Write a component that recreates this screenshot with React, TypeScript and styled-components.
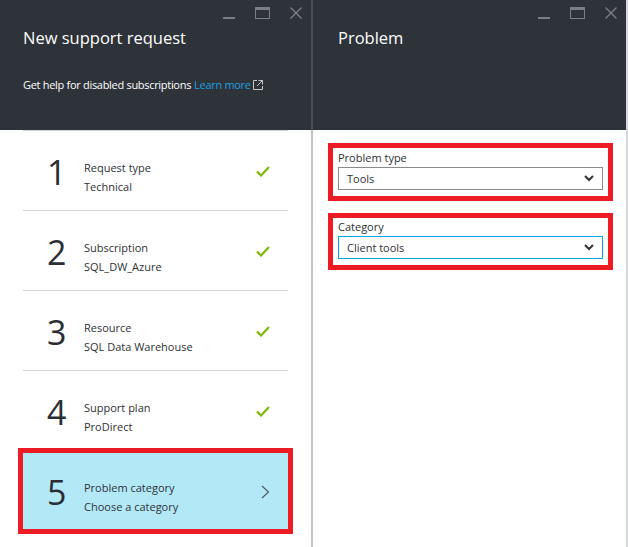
import styled, { createGlobalStyle } from "styled-components";

const GlobalStyle = createGlobalStyle`
  body {
    margin: 0;
    background: #ffffff;
    font-family: "Open Sans", "Noto Sans", sans-serif;
  }
`;

const Page = styled.div`
  display: flex;
  width: 628px;
  height: 547px;
  overflow: hidden;
`;

const Blade = styled.section<{ $width: number }>`
  display: flex;
  flex-direction: column;
  width: ${p => p.$width}px;
  height: 547px;
`;

const Header = styled.header<{ $edge: string; $indent: number }>`
  position: relative;
  height: 130px;
  flex: none;
  background: #2e3239;
  border-right: 2px solid ${p => p.$edge};
  padding: 28px 0 0 ${p => p.$indent}px;
  box-sizing: border-box;
  color: #ffffff;
`;

const Title = styled.h1`
  margin: 0;
  font-size: 16.5px;
  font-weight: 400;
  line-height: 20px;
  color: #ffffff;
`;

const Subtitle = styled.p`
  margin: 30px 0 0;
  font-size: 11px;
  letter-spacing: -0.3px;
  line-height: 14px;
  color: #ffffff;
  display: flex;
  align-items: center;
`;

const Link = styled.a`
  color: #1ba1e2;
  text-decoration: none;
  margin-left: 3px;
  display: inline-flex;
  align-items: center;
  gap: 2px;
`;

const Controls = styled.div`
  position: absolute;
  top: 7px;
  right: 9px;
  display: flex;
  align-items: flex-start;
  gap: 20px;
`;

const Body = styled.div<{ $edge: string; $pad: string }>`
  flex: 1;
  border-right: 2px solid ${p => p.$edge};
  padding: ${p => p.$pad};
  display: flex;
  flex-direction: column;
`;

const Step = styled.div<{ $active?: boolean }>`
  display: flex;
  align-items: center;
  height: ${p => (p.$active ? "76px" : "80px")};
  margin-top: ${p => (p.$active ? "3px" : "0")};
  border-top: ${p => (p.$active ? "none" : "1px solid #d4d4d4")};
  background: ${p => (p.$active ? "#b3e9f7" : "transparent")};
  outline: ${p => (p.$active ? "5px solid #ed1c24" : "none")};
  box-sizing: border-box;
  padding: 2px 18px 0 0;
`;

const StepNumber = styled.div`
  width: 61px;
  padding-left: 24px;
  box-sizing: border-box;
  font-size: 34px;
  line-height: 40px;
  color: #2a2e33;
`;

const StepText = styled.div`
  flex: 1;
  display: flex;
  flex-direction: column;
  padding-top: 10px;
  font-size: 11px;
  line-height: 19px;
  color: #2f3237;
`;

const Field = styled.div<{ $top: number }>`
  border: 5px solid #ed1c24;
  padding: ${p => p.$top}px 5px 6px;
  margin-bottom: 12px;
`;

const FieldLabel = styled.div`
  font-size: 11px;
  line-height: 15px;
  color: #2f3237;
  margin-bottom: 2px;
`;

const Select = styled.div<{ $focus?: boolean }>`
  display: flex;
  align-items: center;
  justify-content: space-between;
  height: 23px;
  box-sizing: border-box;
  border: 1px solid ${p => (p.$focus ? "#00a8e8" : "#8a8a8a")};
  padding: 0 8px 0 8px;
  font-size: 11px;
  color: #2f3237;
  background: #ffffff;
`;

const WindowControls = () => (
  <Controls>
    <svg width="12" height="12" viewBox="0 0 12 12">
      <rect x="0" y="10" width="12" height="2" fill="#7b7e84" />
    </svg>
    <svg width="15" height="12" viewBox="0 0 15 12">
      <rect x="0.5" y="0.5" width="14" height="11" fill="none" stroke="#7b7e84" />
      <rect x="0" y="0" width="15" height="3" fill="#7b7e84" />
    </svg>
    <svg width="12" height="12" viewBox="0 0 12 12">
      <path d="M0.5 0.5 L11.5 11.5 M11.5 0.5 L0.5 11.5" stroke="#7b7e84" strokeWidth="1.4" />
    </svg>
  </Controls>
);

const Check = () => (
  <svg width="14" height="11" viewBox="0 0 14 11">
    <path d="M1 5.5 L5 9.5 L13 1" fill="none" stroke="#7fba00" strokeWidth="2.2" />
  </svg>
);

const Chevron = () => (
  <svg width="9" height="14" viewBox="0 0 9 14">
    <path d="M1 1 L7.5 7 L1 13" fill="none" stroke="#555a60" strokeWidth="1.2" />
  </svg>
);

const DropArrow = () => (
  <svg width="10" height="7" viewBox="0 0 10 7">
    <path d="M1 1 L5 5 L9 1" fill="none" stroke="#2f3237" strokeWidth="2" />
  </svg>
);

const ExternalIcon = () => (
  <svg width="10" height="10" viewBox="0 0 10 10">
    <path d="M4 0.5 H0.5 V9.5 H9.5 V6" fill="none" stroke="#c8c8c8" strokeWidth="1" />
    <path d="M5.5 0.5 H9.5 V4.5 M9.5 0.5 L4 6" fill="none" stroke="#c8c8c8" strokeWidth="1" />
  </svg>
);

const steps = [
  { n: 1, label: "Request type", value: "Technical", done: true },
  { n: 2, label: "Subscription", value: "SQL_DW_Azure", done: true },
  { n: 3, label: "Resource", value: "SQL Data Warehouse", done: true },
  { n: 4, label: "Support plan", value: "ProDirect", done: true },
  { n: 5, label: "Problem category", value: "Choose a category", done: false },
];

export default function App() {
  return (
    <Page>
      <GlobalStyle />
      <Blade $width={313}>
        <Header $edge="#4a4e55" $indent={23}>
          <WindowControls />
          <Title>New support request</Title>
          <Subtitle>
            Get help for disabled subscriptions
            <Link href="#">
              Learn more
              <ExternalIcon />
            </Link>
          </Subtitle>
        </Header>
        <Body $edge="#c4c4c4" $pad="0 23px 0 23px">
          {steps.map(s => (
            <Step key={s.n} $active={!s.done}>
              <StepNumber>{s.n}</StepNumber>
              <StepText>
                <span>{s.label}</span>
                <span>{s.value}</span>
              </StepText>
              {s.done ? <Check /> : <Chevron />}
            </Step>
          ))}
        </Body>
      </Blade>
      <Blade $width={315}>
        <Header $edge="#d6d6de" $indent={25}>
          <WindowControls />
          <Title>Problem</Title>
        </Header>
        <Body $edge="#d6d6de" $pad="13px 13px 0 15px">
          <Field $top={2}>
            <FieldLabel>Problem type</FieldLabel>
            <Select>
              <span>Tools</span>
              <DropArrow />
            </Select>
          </Field>
          <Field $top={1}>
            <FieldLabel>Category</FieldLabel>
            <Select $focus>
              <span>Client tools</span>
              <DropArrow />
            </Select>
          </Field>
        </Body>
      </Blade>
    </Page>
  );
}
